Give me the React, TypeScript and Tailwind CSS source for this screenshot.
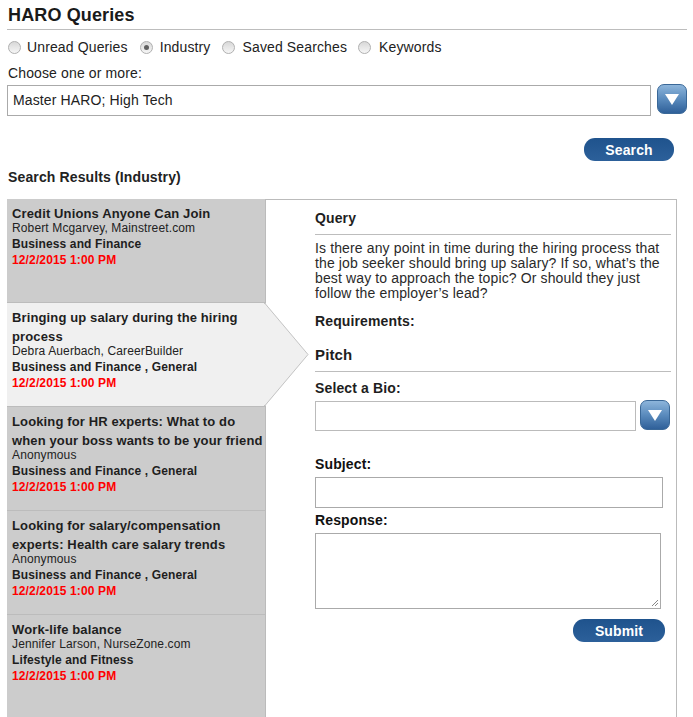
import React from "react";

function Radio({ checked }: { checked?: boolean }) {
  return (
    <span className="flex h-[13px] w-[13px] shrink-0 items-center justify-center rounded-full border border-[#b0b0b0] bg-gradient-to-b from-[#d8d8d8] to-[#f6f6f6]">
      {checked ? <span className="h-[5px] w-[5px] rounded-full bg-[#606060]" /> : null}
    </span>
  );
}

function DropBtn() {
  return (
    <div className="flex h-[30px] w-[30px] shrink-0 items-center justify-center rounded-[7px] border border-[#3a6898] bg-gradient-to-b from-[#8db5db] via-[#5a8bbd] to-[#2f6099]">
      <svg width="16" height="14" viewBox="0 0 16 14">
        <polygon points="1,2 15,2 8,13" fill="#ffffff" />
      </svg>
    </div>
  );
}

function BlueBtn({ label, w }: { label: string; w: string }) {
  return (
    <div
      className={`${w} flex h-[23px] items-center justify-center rounded-[11px] bg-gradient-to-b from-[#1f538d] to-[#2c609a] text-[14px] font-bold leading-[16px] text-white`}
    >
      {label}
    </div>
  );
}

const items = [
  {
    title: "Credit Unions Anyone Can Join",
    author: "Robert Mcgarvey, Mainstreet.com",
    cat: "Business and Finance",
  },
  {
    title: "Bringing up salary during the hiring process",
    author: "Debra Auerbach, CareerBuilder",
    cat: "Business and Finance , General",
    active: true,
  },
  {
    title: "Looking for HR experts: What to do when your boss wants to be your friend",
    author: "Anonymous",
    cat: "Business and Finance , General",
  },
  {
    title: "Looking for salary/compensation experts: Health care salary trends",
    author: "Anonymous",
    cat: "Business and Finance , General",
  },
  {
    title: "Work-life balance",
    author: "Jennifer Larson, NurseZone.com",
    cat: "Lifestyle and Fitness",
  },
];

export default function App() {
  return (
    <div className="h-[717px] w-[693px] overflow-hidden bg-white font-['Liberation_Sans',Arial,sans-serif] tracking-[0.13px] text-[#222]">
      <div className="pl-[7px] pr-[6px]">
        <h1 className="border-b border-[#bdbdbd] pb-[3px] pl-[1px] pt-[4px] text-[18px] font-bold leading-[22px] text-[#1a1a1a]">
          HARO Queries
        </h1>
        <div className="mt-[9px] flex items-center pl-[1px] text-[14px] leading-[16px] text-[#222]">
          <Radio />
          <span className="ml-[6px]">Unread Queries</span>
          <span className="ml-[12px]">
            <Radio checked />
          </span>
          <span className="ml-[7px]">Industry</span>
          <span className="ml-[11px]">
            <Radio />
          </span>
          <span className="ml-[8px]">Saved Searches</span>
          <span className="ml-[11px]">
            <Radio />
          </span>
          <span className="ml-[8px]">Keywords</span>
        </div>
        <div className="mt-[10px] pl-[1px] text-[14px] leading-[16px] text-[#222]">Choose one or more:</div>
        <div className="mt-[4px] flex items-start">
          <div className="flex h-[31px] w-[644px] items-center border border-[#aaa] pl-[5px] text-[14px] text-[#222]">
            Master HARO; High Tech
          </div>
          <div className="ml-[6px] -mt-[1px]">
            <DropBtn />
          </div>
        </div>
        <div className="mt-[22px] flex justify-end pr-[13px]">
          <BlueBtn label="Search" w="w-[90px]" />
        </div>
        <div className="mt-[8px] pl-[1px] text-[14px] font-bold leading-[16px] text-[#222]">
          Search Results (Industry)
        </div>
        <div className="relative mt-[14px] flex w-[670px]">
          <div className="min-h-[520px] w-[258px] shrink-0 bg-[#cccccc]">
            {items.map((it, i) => (
              <div
                key={i}
                className={`h-[104px] border-b border-[#bcbcbc] pl-[5px] pr-[2px] pt-[5px] ${
                  it.active ? "bg-[#f0f0f0]" : "bg-[#cccccc]"
                } ${i === items.length - 1 ? "border-b-0" : ""}`}
              >
                <div className="text-[13px] font-bold leading-[19px] text-[#1e1e1e]">{it.title}</div>
                <div className="text-[12px] leading-[11px] text-[#222]">{it.author}</div>
                <div className="mt-[2px] text-[12px] font-bold leading-[16px] text-[#1e1e1e]">{it.cat}</div>
                <div className="text-[12px] font-bold leading-[16px] text-[#ff0000]">12/2/2015 1:00 PM</div>
              </div>
            ))}
          </div>
          <svg
            className="absolute left-[257px] top-[104px] z-10"
            width="46"
            height="104"
            viewBox="0 0 46 104"
          >
            <polygon points="0,0 1,0 44,51.5 1,103 0,103" fill="#f0f0f0" />
            <polyline points="0,0.5 1,0.5 44,51.5 1,102.5 0,102.5" fill="none" stroke="#c4c4c4" strokeWidth="1" />
          </svg>
          <div className="min-h-[530px] w-[412px] border border-[#bbbbbb] pb-[20px] pl-[49px] pr-[5px] pt-[10px]">
            <div className="border-b border-[#bdbdbd] pb-[8px] text-[14px] font-bold leading-[16px] text-[#1e1e1e]">
              Query
            </div>
            <div className="mt-[6px] text-[14px] leading-[15px] text-[#2a2a2a]">
              Is there any point in time during the hiring process that the job seeker should bring up salary? If so,
              what’s the best way to approach the topic? Or should they just follow the employer’s lead?
            </div>
            <div className="mt-[12px] text-[14px] font-bold leading-[16px] text-[#1e1e1e]">Requirements:</div>
            <div className="mt-[18px] border-b border-[#bdbdbd] pb-[8px] text-[15px] font-bold leading-[16px] text-[#1e1e1e]">
              Pitch
            </div>
            <div className="mt-[8px] text-[14px] font-bold leading-[16px] text-[#1e1e1e]">Select a Bio:</div>
            <div className="mt-[5px] flex items-start">
              <div className="h-[30px] w-[321px] border border-[#bbb]" />
              <div className="ml-[4px] -mt-[1px]">
                <DropBtn />
              </div>
            </div>
            <div className="mt-[25px] text-[14px] font-bold leading-[16px] text-[#111]">Subject:</div>
            <div className="mt-[5px] h-[31px] w-[348px] border border-[#aaa]" />
            <div className="mt-[4px] text-[14px] font-bold leading-[16px] text-[#111]">Response:</div>
            <div className="relative mt-[5px] h-[76px] w-[346px] border border-[#aaa]">
              <svg className="absolute bottom-[1px] right-[1px]" width="9" height="9" viewBox="0 0 9 9">
                <line x1="2" y1="8" x2="8" y2="2" stroke="#888" strokeWidth="1" />
                <line x1="5" y1="8" x2="8" y2="5" stroke="#888" strokeWidth="1" />
              </svg>
            </div>
            <div className="mt-[10px] flex justify-end pr-[6px]">
              <BlueBtn label="Submit" w="w-[92px]" />
            </div>
          </div>
        </div>
      </div>
    </div>
  );
}
